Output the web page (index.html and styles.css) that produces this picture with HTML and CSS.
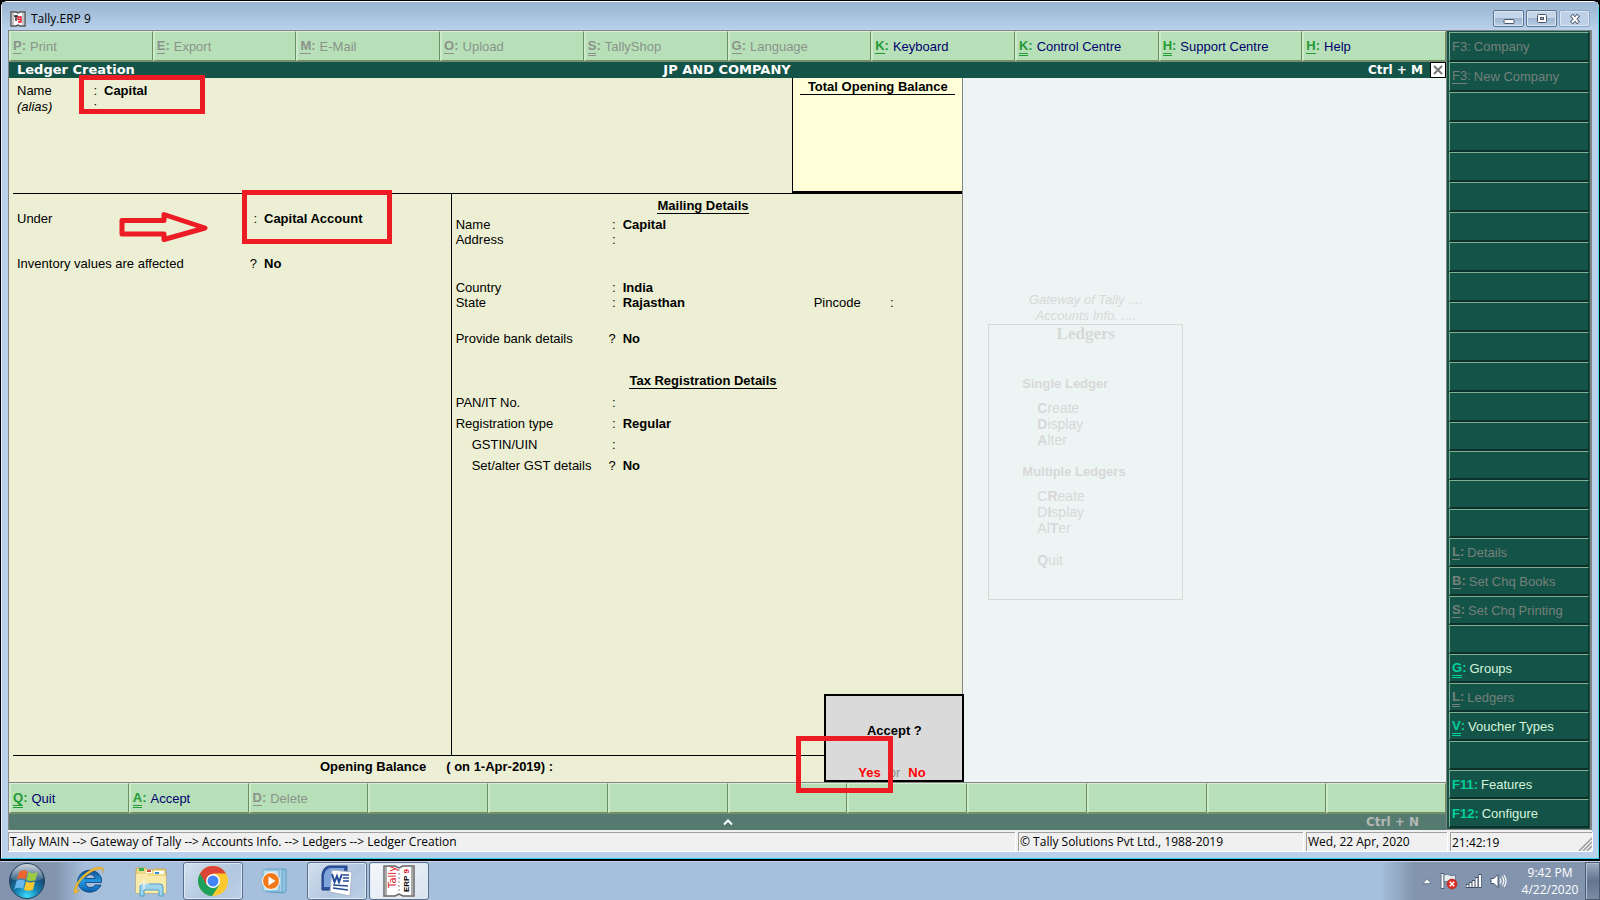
FILE: index.html
```html
<!DOCTYPE html>
<html lang="en">
<head>
<meta charset="utf-8">
<title>Tally.ERP 9</title>
<link rel="stylesheet" href="styles.css">
</head>
<body>
<div class="window">
  <header class="titlebar">
    <svg class="app-icon" width="16" height="16" viewBox="0 0 16 16"><path d="M1 1h5l2 1 2-1h5v14h-5l-2-1-2 1H1z" fill="#fff" stroke="#555" stroke-width="1.4"/><path d="M3 1v13M13 1v13" stroke="#888"/><path d="M4 5h4M6 5v5" stroke="#222" stroke-width="1.4"/><path d="M11 8.500H8V6h3v5H8" fill="none" stroke="#e01020" stroke-width="1.300"/></svg>
    <h1 class="app-title">Tally.ERP 9</h1>
    <div class="win-buttons">
      <button class="win-btn" aria-label="Minimize"><svg width="12" height="12" viewBox="0 0 12 12"><rect x="1" y="6.500" width="10" height="4" rx="1" fill="#fff" stroke="#4a5568"/></svg></button>
      <button class="win-btn" aria-label="Maximize"><svg width="12" height="12" viewBox="0 0 12 12"><rect x="1.500" y="1.500" width="9" height="8" rx="1" fill="#fff" stroke="#4a5568"/><rect x="4.500" y="4.500" width="3" height="2" fill="#a9bdd6" stroke="#4a5568"/></svg></button>
      <button class="win-btn win-btn-close" aria-label="Close window"><svg width="12" height="12" viewBox="0 0 12 12"><path d="M2.500 2l7 8M9.500 2l-7 8" stroke="#4a5568" stroke-width="4"/><path d="M3 2.500l6 7M9 2.500l-6 7" stroke="#fff" stroke-width="2"/></svg></button>
    </div>
  </header>

  <div class="client">
    <div class="main">
      <nav class="toolbar">
        <button class="tool" disabled><span class="key"><u>P</u>:</span>Print</button>
        <button class="tool" disabled><span class="key"><u>E</u>:</span>Export</button>
        <button class="tool" disabled><span class="key"><u>M</u>:</span>E-Mail</button>
        <button class="tool" disabled><span class="key"><u>O</u>:</span>Upload</button>
        <button class="tool" disabled><span class="key"><u class="dbl">S</u>:</span>TallyShop</button>
        <button class="tool" disabled><span class="key"><u>G</u>:</span>Language</button>
        <button class="tool"><span class="key"><u>K</u>:</span>Keyboard</button>
        <button class="tool"><span class="key"><u class="dbl">K</u>:</span>Control Centre</button>
        <button class="tool"><span class="key"><u class="dbl">H</u>:</span>Support Centre</button>
        <button class="tool"><span class="key"><u>H</u>:</span>Help</button>
      </nav>

      <div class="screen-title">
        <h2 class="screen-name">Ledger Creation</h2>
        <span class="company">JP AND COMPANY</span>
        <div class="screen-end">
          <span class="shortcut">Ctrl + M</span>
          <button class="screen-close" aria-label="Close"><svg width="12" height="12" viewBox="0 0 12 12"><path d="M2 2l8 8M10 2l-8 8" stroke="#777" stroke-width="2"/></svg></button>
        </div>
      </div>

      <div class="workspace">
        <form class="ledger">
          <div class="ledger-top">
            <div class="identity">
              <div class="row row-id"><label for="name">Name</label><span class="sep">:</span><input id="name" value="Capital"></div>
              <div class="row row-id"><label for="alias"><i>(alias)</i></label><span class="sep">:</span><input id="alias" value=""></div>
            </div>
            <div class="total"><h3 class="total-title">Total Opening Balance</h3></div>
          </div>
          <div class="ledger-body">
            <div class="col-left">
              <div class="row row-left"><label for="under">Under</label><span class="sep">:</span><input id="under" value="Capital Account"></div>
              <div class="row row-left gap-30"><label for="inv">Inventory values are affected</label><span class="sep">?</span><input id="inv" value="No"></div>
            </div>
            <div class="col-right">
              <h3 class="section">Mailing Details</h3>
              <div class="row row-right gap-3"><label for="mname">Name</label><span class="sep">:</span><input id="mname" value="Capital"></div>
              <div class="row row-right"><label for="addr">Address</label><span class="sep">:</span><input id="addr" value=""></div>
              <div class="row row-right gap-33"><label for="country">Country</label><span class="sep">:</span><input id="country" value="India"></div>
              <div class="row row-right row-state"><label for="state">State</label><span class="sep">:</span><input id="state" value="Rajasthan"><label for="pin">Pincode</label><span class="sep">:</span><input id="pin" value=""></div>
              <div class="row row-right gap-21"><label for="bank">Provide bank details</label><span class="sep">?</span><input id="bank" value="No"></div>
              <h3 class="section gap-28">Tax Registration Details</h3>
              <div class="row row-right gap-6"><label for="pan">PAN/IT No.</label><span class="sep">:</span><input id="pan" value=""></div>
              <div class="row row-right gap-6"><label for="reg">Registration type</label><span class="sep">:</span><input id="reg" value="Regular"></div>
              <div class="row row-right gap-6"><label class="indent" for="gstin">GSTIN/UIN</label><span class="sep">:</span><input id="gstin" value=""></div>
              <div class="row row-right gap-6"><label class="indent" for="gst">Set/alter GST details</label><span class="sep">?</span><input id="gst" value="No"></div>
            </div>
          </div>
          <div class="ledger-foot"><label for="opening">Opening Balance</label><span>( on 1-Apr-2019) :</span><input id="opening" value=""></div>

          <div class="accept" role="dialog" aria-label="Accept">
            <p class="accept-q">Accept ?</p>
            <p class="accept-a"><button type="button" class="choice">Yes</button><span class="or">or</span><button type="button" class="choice">No</button></p>
          </div>
          <div class="mark mark-name"></div>
          <div class="mark mark-under"></div>
          <div class="mark mark-yes"></div>
          <svg class="mark-arrow" width="92" height="34" viewBox="0 0 92 34"><path d="M3 9.500h42V3.500L86 17 45 28.500v-5.500H3z" fill="none" stroke="#ed1c24" stroke-width="5" stroke-linejoin="round"/></svg>
        </form>

        <section class="gateway">
          <div class="gateway-menu">
            <p class="crumb">Gateway of Tally ....</p>
            <p class="crumb">Accounts Info. ....</p>
            <div class="menu-box">
              <h3 class="menu-title">Ledgers</h3>
              <h4 class="menu-group">Single Ledger</h4>
              <button class="menu-item"><b>C</b>reate</button>
              <button class="menu-item"><b>D</b>isplay</button>
              <button class="menu-item"><b>A</b>lter</button>
              <h4 class="menu-group menu-group-2">Multiple Ledgers</h4>
              <button class="menu-item">C<b>R</b>eate</button>
              <button class="menu-item">D<b>I</b>splay</button>
              <button class="menu-item">Al<b>T</b>er</button>
              <button class="menu-item menu-quit"><b>Q</b>uit</button>
            </div>
          </div>
        </section>
      </div>

      <nav class="toolbar toolbar-bottom">
        <button class="tool"><span class="key"><u class="dbl">Q</u>:</span>Quit</button>
        <button class="tool"><span class="key"><u class="dbl">A</u>:</span>Accept</button>
        <button class="tool" disabled><span class="key"><u>D</u>:</span>Delete</button>
        <div class="tool"></div><div class="tool"></div><div class="tool"></div><div class="tool"></div><div class="tool"></div><div class="tool"></div><div class="tool"></div><div class="tool"></div><div class="tool"></div>
      </nav>
      <div class="calc-bar">
        <svg class="calc-arrow" width="10" height="8" viewBox="0 0 10 8"><path d="M1 6.500l4-4 4 4" fill="none" stroke="#fff" stroke-width="2"/></svg>
        <span class="calc-key">Ctrl + N</span>
      </div>
    </div>

    <aside class="side">
      <button class="side-btn" disabled><span class="fkey">F3:</span>Company</button>
      <button class="side-btn" disabled><span class="fkey"><u>F3</u>:</span>New Company</button>
      <div class="side-btn"></div><div class="side-btn"></div><div class="side-btn"></div><div class="side-btn"></div><div class="side-btn"></div>
      <div class="side-btn"></div><div class="side-btn"></div><div class="side-btn"></div><div class="side-btn"></div><div class="side-btn"></div>
      <div class="side-btn"></div><div class="side-btn"></div><div class="side-btn"></div><div class="side-btn"></div><div class="side-btn"></div>
      <button class="side-btn" disabled><span class="key"><u>L</u>:</span>Details</button>
      <button class="side-btn" disabled><span class="key"><u>B</u>:</span>Set Chq Books</button>
      <button class="side-btn" disabled><span class="key"><u>S</u>:</span>Set Chq Printing</button>
      <div class="side-btn"></div>
      <button class="side-btn"><span class="key"><u class="dbl">G</u>:</span>Groups</button>
      <button class="side-btn" disabled><span class="key"><u class="dbl">L</u>:</span>Ledgers</button>
      <button class="side-btn"><span class="key"><u class="dbl">V</u>:</span>Voucher Types</button>
      <div class="side-btn"></div>
      <button class="side-btn"><span class="key">F11:</span>Features</button>
      <button class="side-btn"><span class="key">F12:</span>Configure</button>
    </aside>
  </div>

  <footer class="status">
    <span class="cell cell-path">Tally MAIN --&gt; Gateway of Tally --&gt; Accounts Info. --&gt; Ledgers --&gt; Ledger Creation</span>
    <span class="cell cell-copy">© Tally Solutions Pvt Ltd., 1988-2019</span>
    <span class="cell cell-date">Wed, 22 Apr, 2020</span>
    <span class="cell cell-time">21:42:19<svg class="grip" width="14" height="14" viewBox="0 0 14 14"><path d="M1 14L14 1M5 14l9-9M9 14l5-5" stroke="#999" stroke-width="1.500"/></svg></span>
  </footer>
</div>

<div class="taskbar">
  <button class="start" aria-label="Start">
    <svg width="38" height="38" viewBox="0 0 38 38"><defs><radialGradient id="orb" cx=".5" cy=".95" r=".95"><stop offset="0" stop-color="#3fe0ff"/><stop offset=".35" stop-color="#1583b4"/><stop offset=".7" stop-color="#174a72"/><stop offset="1" stop-color="#56708a"/></radialGradient><linearGradient id="gloss" x2="0" y2="1"><stop offset="0" stop-color="#fff" stop-opacity=".7"/><stop offset="1" stop-color="#fff" stop-opacity=".1"/></linearGradient></defs><circle cx="19" cy="19" r="17.500" fill="url(#orb)" stroke="#28405c"/><path d="M3 17a16 15 0 0 1 32 0q-16 6-32 0z" fill="url(#gloss)"/><path d="M11 10q4-3 8.500-.5l-2 8q-4-2.500-8.500 0z" fill="#ec6430"/><path d="M20.500 10q4 2.500 9 0l-2 8q-4.500 2-9 0z" fill="#9ccb40"/><path d="M8.500 19q4-2.500 8.500 0l-2 8q-4-2.500-8.500 0z" fill="#69b7ec"/><path d="M18 19.500q4.500 2 9 0l-2 8q-4.500 2.500-9 0z" fill="#fcc832"/></svg>
  </button>
  <button class="task" aria-label="Internet Explorer">
    <svg width="34" height="32" viewBox="0 0 34 32"><defs><linearGradient id="ie" x2="0" y2="1"><stop offset="0" stop-color="#0d4d90"/><stop offset=".5" stop-color="#2497e2"/><stop offset="1" stop-color="#0b5fae"/></linearGradient></defs><path d="M29 20a12 11 0 1 1 .5-6v3.500H13.500q.5 5 5 5 3.500 0 4.500-2.500zM13.500 13.500H23q-.5-4-4.500-4t-5 4z" fill="url(#ie)" stroke="#0a3c74" stroke-width=".8"/><path d="M8 25q-6 6-6 1.500C2 18 16 2 28 2q5 0 3 6 1-4-3-4C18 5 5 17 4.500 25q0 2 3.500 0z" fill="#f2bb2c" stroke="#c98f18" stroke-width=".4"/></svg>
  </button>
  <button class="task" aria-label="Explorer">
    <svg width="34" height="32" viewBox="0 0 34 32"><path d="M2 5l1-2h9l2 2h5l1-1h11l1 4v20H2z" fill="#eed98a" stroke="#c8a84e"/><path d="M5 3h5v3H5z" fill="#32b24a"/><path d="M12 5h6v3h-6z" fill="#fff"/><path d="M13 5h4v2h-4z" fill="#d24b30"/><path d="M20 6h10v3H20z" fill="#fff"/><path d="M21 7h4v2h-4z" fill="#2e8ed8"/><path d="M2 9h11l2 2h17v17H2z" fill="#f8eaa8"/><path d="M6 31V22q0-3 3-3h17q3 0 3 3v9h-4v-6H10v6z" fill="#9fd4ec" stroke="#4d9fc8"/><path d="M10 14v10M5 19h10" stroke="#fff"/></svg>
  </button>
  <button class="task task-open" aria-label="Chrome">
    <svg width="30" height="30" viewBox="0 0 30 30"><circle cx="15" cy="15" r="15" fill="#fbc92e"/><path d="M2 7.500A15 15 0 0 0 14 30l7.500-11.200L15 15z" fill="#1da15b"/><path d="M2 7.500a15 15 0 0 1 26 0H15L8.500 18.800z" fill="#db4437"/><circle cx="15" cy="15" r="7" fill="#fff"/><circle cx="15" cy="15" r="5.500" fill="#4285f4"/></svg>
  </button>
  <button class="task" aria-label="Media Player">
    <svg width="30" height="28" viewBox="0 0 30 28"><path d="M10 3l16-1v22l-3 2-13-1z" fill="#8fc3e0" stroke="#5c9cc4"/><path d="M6 2h16v23H6z" fill="#a7d3ea" stroke="#68a5cb"/><path d="M3 3h16v21H3z" fill="#c2e2f2" stroke="#72acce"/><circle cx="11" cy="14" r="8.500" fill="#f27a1c" stroke="#fff"/><path d="M8.500 9.500v9l7-4.500z" fill="#fff"/></svg>
  </button>
  <button class="task task-open" aria-label="Word">
    <svg width="34" height="32" viewBox="0 0 34 32"><path d="M9 1h18v20l-6 4H2V10q1-8 7-9z" fill="#2f55a0" stroke="#1c3c7e"/><path d="M10 3h14v19H4V11q1-7 6-8z" fill="#7ea4da"/><path d="M12 5l20 2-2 24-20-4z" fill="#fff" stroke="#a9b6ca"/><path d="M12 9l2.500 8 2.500-6 2 6 3-8" fill="none" stroke="#254b97" stroke-width="2"/><path d="M23 10h6M23 13h6M23 16h6M13 20l15 1M13 23l15 2" stroke="#254b97" stroke-width="1.600"/></svg>
  </button>
  <button class="task task-open task-active" aria-label="Tally">
    <svg width="34" height="32" viewBox="0 0 34 32"><path d="M2 1h11l4 2 4-2h11v30H21l-4-2-4 2H2z" fill="#fff" stroke="#666" stroke-width="1.500"/><path d="M4 2v28M30 2v28" stroke="#aaa" stroke-width="2"/><path d="M17 4v24" stroke="#888" stroke-dasharray="2 2"/><text class="tally-red" transform="translate(14 23) rotate(-90)">Tally</text><text class="tally-black" transform="translate(27 27) rotate(-90)">ERP <tspan class="tally-nine">9</tspan></text></svg>
  </button>
  <div class="tray">
    <div class="tray-icons">
      <svg width="10" height="6" viewBox="0 0 10 6"><path d="M1 5.500L5 1l4 4.500z" fill="#fff" stroke="#56657b" stroke-width=".7"/></svg>
      <svg width="18" height="18" viewBox="0 0 18 18"><path d="M2.500 1v16" stroke="#4d5c72" stroke-width="3.500"/><path d="M2.500 2v14" stroke="#fff" stroke-width="2"/><path d="M4 3q3-1.500 5.500 0t6 0v7q-3.500 1.500-6 0t-5.500 0z" fill="#e6ebf2" stroke="#4d5c72" stroke-width=".7"/><circle cx="12" cy="12" r="5" fill="#dc2d22" stroke="#a01c14" stroke-width=".5"/><path d="M9.800 9.800l4.400 4.400M14.200 9.800l-4.400 4.400" stroke="#fff" stroke-width="1.600"/></svg>
      <svg width="16" height="14" viewBox="0 0 16 14"><path d="M1.500 14v-4M4.500 14V8M7.500 14V6M10.500 14V3M14 14V0" stroke="#3f4d62" stroke-width="3"/><path d="M1.500 13v-2M4.500 13V9M7.500 13V7M10.500 13V4M14 13V1" stroke="#fff" stroke-width="2"/></svg>
      <svg width="17" height="16" viewBox="0 0 17 16"><path d="M1 5.500h3L8 1.500v13l-4-4H1z" fill="#fff" stroke="#3f4d62" stroke-width=".9"/><path d="M10 5.500q2 2.500 0 5M12 3.500q3.500 4.500 0 9M14 2q4 6 0 12" fill="none" stroke="#fff" stroke-width="1.200"/></svg>
    </div>
    <div class="clock"><span>9:42 PM</span><span>4/22/2020</span></div>
    <button class="show-desktop" aria-label="Show desktop"></button>
  </div>
</div>
</body>
</html>
```
FILE: styles.css
```css
* { box-sizing: border-box; }
body {
  margin: 0;
  min-height: 100vh;
  display: flex;
  flex-direction: column;
  background: #000;
  font: 13px/15px "Liberation Sans", Arial, sans-serif;
  color: #000;
}
h1, h2, h3, h4, p { margin: 0; font-size: inherit; }
button, input { font: inherit; color: inherit; border: 0; margin: 0; padding: 0; background: none; }
button { cursor: pointer; }
svg { display: block; flex: none; }

.window {
  flex: 1;
  display: flex;
  flex-direction: column;
  margin: 1px 1px 2px;
  padding: 0 7px 6px;
  background: #b9d1ea;
  border-top: 1px solid #fff;
  border-bottom: 1px solid #28d4ea;
  border-radius: 6px 6px 0 0;
  box-shadow: inset 1px 0 #e4eef8, inset -1px 0 #48d8ee;
}
.titlebar {
  display: flex;
  align-items: center;
  gap: 5px;
  height: 28px;
  margin: 0 -6px;
  padding: 5px 8px 0 8px;
  background: linear-gradient(#99b4d1, #b9d1ea);
}
.app-title { flex: 1; font: 12px/16px "Open Sans", "Noto Sans", sans-serif; }
.win-buttons { display: flex; gap: 2px; }
.win-btn {
  display: flex;
  align-items: center;
  justify-content: center;
  width: 31px;
  height: 17px;
  border: 1px solid #5c7391;
  border-radius: 2px;
  background: linear-gradient(#c5d6ea 50%, #9fb7d2 50%, #b7cde5);
  box-shadow: inset 0 0 0 1px #dbe7f4;
}
.win-btn-close { border-color: #8ca5c4; background: #bdd0e7; }

.client { flex: 1; display: flex; border: 1px solid #848484; border-bottom: 0; }
.main { flex: 1; display: flex; flex-direction: column; min-width: 0; }

.toolbar {
  display: flex;
  height: 31px;
  padding-bottom: 1px;
  background: #7d8f70;
}
.tool {
  flex: 1 1 0;
  display: flex;
  align-items: center;
  gap: 4px;
  padding: 0 0 0 2px;
  color: #00006e;
  background: #b7e0b8;
  border: solid;
  border-width: 1px 1px 1px 2px;
  border-color: #d8f0d8 #6b8f5e #6b8f5e #cdeacb;
}
.tool .key { color: #249a35; font-weight: bold; }
.tool:disabled, .tool:disabled .key { color: #8b938b; }
u { display: inline-block; text-decoration: none; border-bottom: 1px solid; }
.dbl { border-bottom: 3px double; margin-bottom: -2px; }
.toolbar-bottom { height: 32px; border-top: 1px solid #848484; }

.screen-title {
  display: grid;
  grid-template-columns: 1fr auto 1fr;
  align-items: center;
  height: 16px;
  padding-left: 8px;
  background: #145448;
  color: #fff;
  font: bold 13px/16px "DejaVu Sans", Verdana, sans-serif;
}
.company { padding-right: 9px; }
.screen-end { display: flex; justify-content: flex-end; gap: 7px; }
.shortcut { font-size: 12px; }
.screen-close {
  display: flex;
  align-items: center;
  justify-content: center;
  width: 16px;
  height: 16px;
  border: 1px solid #000;
  background: #fff;
}

.workspace { flex: 1; display: grid; grid-template-columns: 955fr 483fr; background: #ecf5f4; }
.ledger {
  position: relative;
  display: flex;
  flex-direction: column;
  padding-left: 4px;
  background: #ecefd3;
  border-right: 1px solid #848484;
}
.ledger-top { display: flex; height: 116px; border-bottom: 1px solid #000; }
.identity { flex: 1; padding: 4px 0 0 4px; }
.total {
  width: 170px;
  height: 115px;
  text-align: center;
  background: #ffffd9;
  border-left: 1px solid #000;
  border-bottom: 2px solid #000;
}
.total-title { margin: 1px 7px 0; border-bottom: 1px solid #000; line-height: 15px; }
.ledger-body { flex: 1; display: grid; grid-template-columns: 439fr 511fr; }
.col-left { padding: 17px 0 0 4px; border-right: 1px solid #000; }
.col-right { padding: 5px 12px 0 4px; }
.row { display: grid; align-items: center; height: 15px; }
.row input { width: 100%; min-width: 0; font-weight: bold; height: 15px; }
.sep { text-align: right; padding-right: 7px; }
.row-id { grid-template-columns: 72px 15px 1fr; height: 16px; }
.row-left { grid-template-columns: 230px 17px 1fr; }
.row-right { grid-template-columns: 150px 17px 1fr; }
.row-state { grid-template-columns: 150px 17px 191px 70px 17px 1fr; }
.indent { padding-left: 16px; }
.section { width: max-content; margin: 0 auto; border-bottom: 1px solid #000; line-height: 14px; }
.gap-3 { margin-top: 3px; }
.gap-6 { margin-top: 6px; }
.gap-21 { margin-top: 21px; }
.gap-28 { margin-top: 28px; }
.gap-30 { margin-top: 30px; }
.gap-33 { margin-top: 33px; }
.ledger-foot {
  display: flex;
  gap: 20px;
  height: 27px;
  padding: 3px 0 0 307px;
  border-top: 1px solid #000;
  font-weight: bold;
}
.ledger-foot input { width: 100px; height: 15px; }

.accept {
  position: absolute;
  right: -2px;
  bottom: 0;
  width: 140px;
  height: 88px;
  padding-top: 27px;
  text-align: center;
  font-weight: bold;
  background: #dadada;
  border: 2px solid #000;
}
.accept-a { display: flex; gap: 8px; margin-top: 27px; padding-left: 32px; }
.choice { color: #f00; font-weight: bold; }
.or { color: #8c8c8c; font-weight: normal; }
.mark { position: absolute; border: 5px solid #ed1c24; pointer-events: none; }
.mark-name { left: 70px; top: -3px; width: 126px; height: 39px; }
.mark-under { left: 233px; top: 112px; width: 150px; height: 54px; }
.mark-yes { right: 69px; bottom: -11px; width: 97px; height: 57px; }
.mark-arrow { position: absolute; left: 110px; top: 133px; }

.gateway { padding: 214px 0 0 25px; color: #d8d8d8; }
.gateway-menu { width: 195px; }
.crumb { line-height: 16px; font-style: italic; text-align: center; }
.menu-box {
  display: flex;
  flex-direction: column;
  align-items: flex-start;
  height: 276px;
  padding-left: 48px;
  border: 1px solid #d8d8d8;
}
.menu-title { align-self: center; margin-left: -48px; font: bold 17px/18px "Liberation Serif", "Times New Roman", serif; }
.menu-group { margin: 33px 0 8px -15px; line-height: 16px; }
.menu-group-2 { margin-top: 16px; }
.menu-item { font-size: 14px; line-height: 16px; }
.menu-quit { margin-top: 16px; }

.calc-bar {
  display: grid;
  grid-template-columns: 1fr auto 1fr;
  align-items: center;
  height: 16px;
  background: #557b71;
}
.calc-arrow { grid-column: 2; }
.calc-key { padding-right: 27px; text-align: right; color: #b4b8b4; font: bold 12px/16px "DejaVu Sans", Verdana, sans-serif; }

.side {
  width: 145px;
  display: grid;
  grid-template-rows: repeat(14, 30fr) repeat(13, 29fr);
  padding: 1px 1px 1px 2px;
  background: #145448;
  border: solid #848484;
  border-width: 0 1px 1px 1px;
}
.side-btn {
  display: flex;
  align-items: center;
  gap: 3px;
  min-height: 0;
  padding: 0 0 0 2px;
  color: #d4f4dc;
  background: #145448;
  border: solid;
  border-width: 1px 1px 2px 1px;
  border-color: #7fb094 #0d302a #0d302a #7fb094;
}
.side-btn .key { color: #00d09c; font-weight: bold; }
.side-btn:disabled, .side-btn:disabled .key { color: #74807a; }

.status {
  display: flex;
  gap: 3px;
  height: 22px;
  padding-top: 2px;
  background: #f0f0f0;
  border-bottom: 1px solid #fff;
  font: 12px/17px "Open Sans", "Noto Sans", sans-serif;
}
.cell { padding-left: 1px; border: solid #a0a0a0; border-width: 1px 0 0 1px; box-shadow: 1px 0 #fff; white-space: nowrap; }
.cell-path { flex: 1; }
.cell-copy { width: 285px; }
.cell-date { width: 141px; }
.cell-time { display: flex; justify-content: space-between; align-items: flex-end; width: 142px; }

.taskbar {
  display: flex;
  align-items: center;
  gap: 2px;
  height: 39px;
  background: linear-gradient(90deg, #8395ae 55px, #a6bfdc 85px, #a6bfdc calc(100% - 220px), #8395ae calc(100% - 185px));
  border-top: 1px solid #c4d3e5;
}
.start { display: flex; width: 57px; padding-left: 8px; }
.task {
  display: flex;
  align-items: center;
  justify-content: center;
  width: 60px;
  height: 38px;
}
.task-open {
  border: 1px solid #5b6f8b;
  border-radius: 3px;
  background: linear-gradient(135deg, #d3dfed, #b1c7e0 60%, #bccfe5);
  box-shadow: inset 0 0 0 1px #dfe9f4;
}
.task-active { background: linear-gradient(135deg, #f4f7fb, #d8e3f0); }
.tally-red { font: 10px "DejaVu Sans", sans-serif; fill: #e01428; }
.tally-black { font: bold 8px "Liberation Sans", sans-serif; fill: #000; }
.tally-nine { fill: #e01428; }
.tray { display: flex; align-items: center; margin-left: auto; height: 100%; color: #fff; }
.tray-icons { display: flex; align-items: center; gap: 8px; }
.clock {
  display: flex;
  flex-direction: column;
  width: 70px;
  margin-left: 8px;
  text-align: center;
  font: 12px/17px "Open Sans", "Noto Sans", sans-serif;
}
.show-desktop {
  width: 15px;
  height: 100%;
  border: 1px solid #4b5a70;
  background: linear-gradient(#9aabc2, #62748e 50%, #7a8ca6);
  box-shadow: inset 1px 1px #b4c1d3;
}
```
